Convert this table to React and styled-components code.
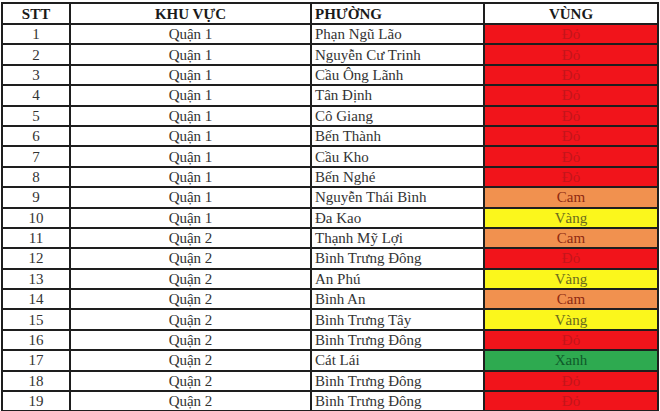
import React from 'react';
import styled, { createGlobalStyle } from 'styled-components';

const rows = [
  ['1', 'Quận 1', 'Phạn Ngũ Lão', 'red'],
  ['2', 'Quận 1', 'Nguyễn Cư Trinh', 'red'],
  ['3', 'Quận 1', 'Cầu Ông Lãnh', 'red'],
  ['4', 'Quận 1', 'Tân Định', 'red'],
  ['5', 'Quận 1', 'Cô Giang', 'red'],
  ['6', 'Quận 1', 'Bến Thành', 'red'],
  ['7', 'Quận 1', 'Cầu Kho', 'red'],
  ['8', 'Quận 1', 'Bến Nghé', 'red'],
  ['9', 'Quận 1', 'Nguyễn Thái Bình', 'orange'],
  ['10', 'Quận 1', 'Đa Kao', 'yellow'],
  ['11', 'Quận 2', 'Thạnh Mỹ Lợi', 'orange'],
  ['12', 'Quận 2', 'Bình Trưng Đông', 'red'],
  ['13', 'Quận 2', 'An Phú', 'yellow'],
  ['14', 'Quận 2', 'Bình An', 'orange'],
  ['15', 'Quận 2', 'Bình Trưng Tây', 'yellow'],
  ['16', 'Quận 2', 'Bình Trưng Đông', 'red'],
  ['17', 'Quận 2', 'Cát Lái', 'green'],
  ['18', 'Quận 2', 'Bình Trưng Đông', 'red'],
  ['19', 'Quận 2', 'Bình Trưng Đông', 'red'],
];

const zones = {
  red: { label: 'Đỏ', bg: '#f1141b', fg: '#c4151a' },
  orange: { label: 'Cam', bg: '#f1914f', fg: '#8e2a12' },
  yellow: { label: 'Vàng', bg: '#fbf71c', fg: '#6a6a1c' },
  green: { label: 'Xanh', bg: '#2eaa50', fg: '#0f5a2a' },
};

function App() {
  return (
    <>
      <GlobalStyle />
      <Table>
        <colgroup>
          <col style={{ width: 68 }} />
          <col style={{ width: 241 }} />
          <col style={{ width: 173 }} />
          <col style={{ width: 174 }} />
        </colgroup>
        <thead>
          <HeadRow>
            <HeadCell>STT</HeadCell>
            <HeadCell>KHU VỰC</HeadCell>
            <HeadCell $left>PHƯỜNG</HeadCell>
            <HeadCell>VÙNG</HeadCell>
          </HeadRow>
        </thead>
        <tbody>
          {rows.map(([stt, area, ward, zone]) => (
            <Row key={stt}>
              <Cell>{stt}</Cell>
              <Cell>{area}</Cell>
              <Cell $left>{ward}</Cell>
              <ZoneCell $bg={zones[zone].bg} $fg={zones[zone].fg}>
                {zones[zone].label}
              </ZoneCell>
            </Row>
          ))}
        </tbody>
      </Table>
    </>
  );
}

export default App;

const GlobalStyle = createGlobalStyle`
  body {
    margin: 0;
    background: #ffffff;
    font-family: 'Liberation Serif', 'Times New Roman', serif;
  }
`;

const Table = styled.table`
  margin: 2px 0 0 1px;
  width: 657px;
  table-layout: fixed;
  border-collapse: collapse;
  border: 2px solid #1e1e1e;
  font-size: 15px;
`;

const HeadRow = styled.tr`
  height: 21px;
`;

const Row = styled.tr`
  height: 20.4px;
`;

const HeadCell = styled.th`
  border: 2px solid #1e1e1e;
  padding: 0 3px;
  font-weight: 700;
  color: #1a1a1a;
  text-align: ${(p) => (p.$left ? 'left' : 'center')};
  line-height: 16px;
`;

const Cell = styled.td`
  border: 2px solid #1e1e1e;
  padding: 0 3px;
  color: #333333;
  text-align: ${(p) => (p.$left ? 'left' : 'center')};
  line-height: 16px;
  white-space: nowrap;
`;

const ZoneCell = styled(Cell)`
  background: ${(p) => p.$bg};
  color: ${(p) => p.$fg};
  text-align: center;
`;
